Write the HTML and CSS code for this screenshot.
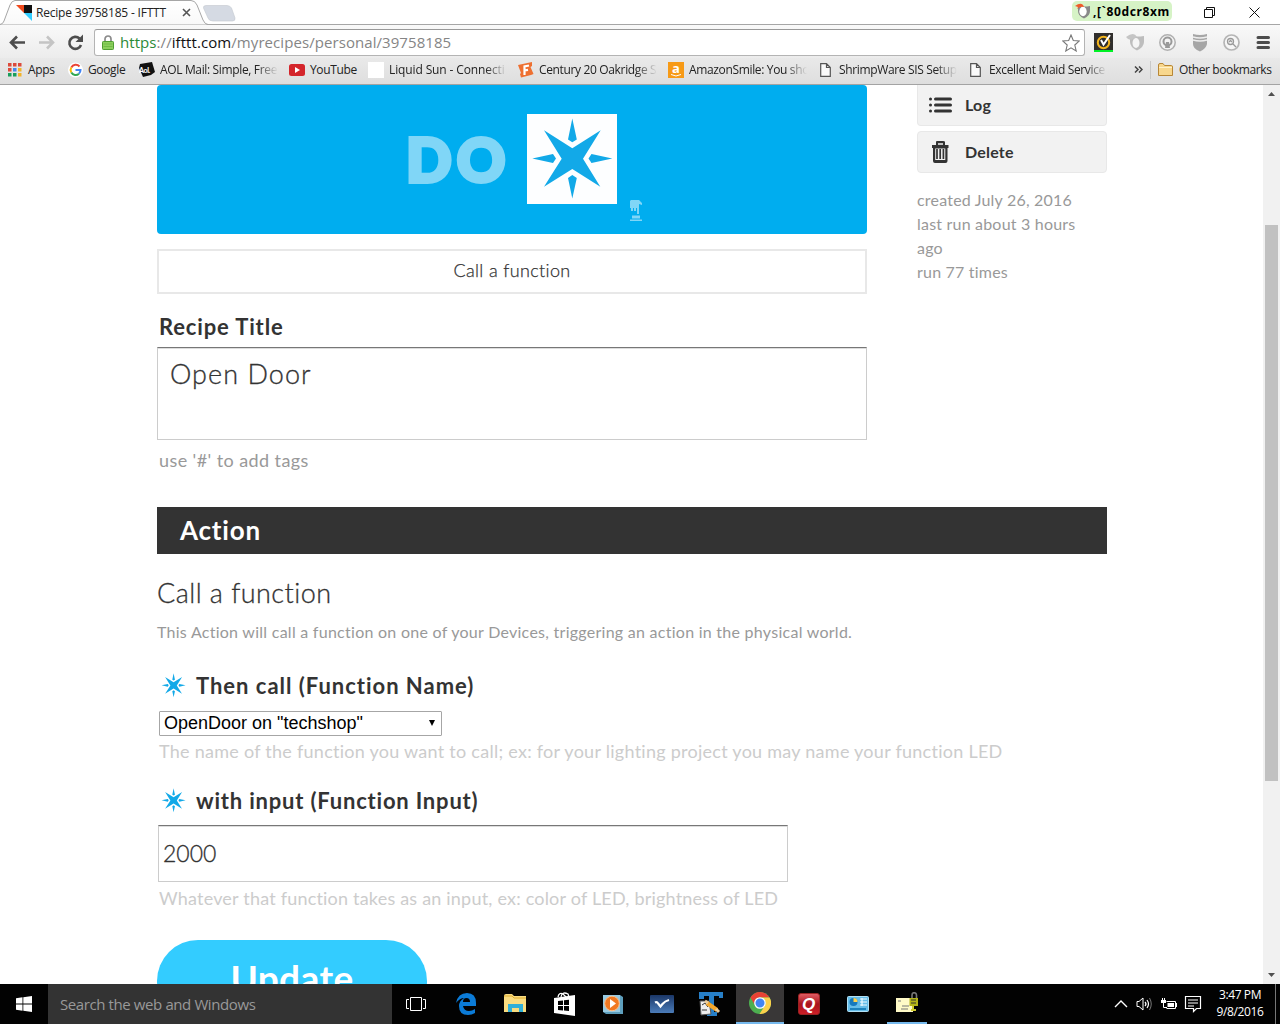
FILE: index.html
```html
<!DOCTYPE html>
<html lang="en">
<head>
<meta charset="utf-8">
<title>Recipe 39758185 - IFTTT</title>
<link rel="stylesheet" href="styles.css">
</head>
<body>
<svg class="defs" aria-hidden="true">
  <symbol id="star" viewBox="0 0 90 90"><path d="M17 16.3 45.3 34.3 73.7 16.3 56 44.7 73.3 72.7 45.3 55 17 72.7 34.7 44.7ZM45.3 4.5 49.8 25.5 45.3 28.3 41 25.5ZM45.3 84.5 41 64 45.3 61 49.8 64ZM5.3 44.5 26 40 29 44.5 26 49ZM85.3 44.5 64.5 40 61.5 44.5 64.5 49Z"/></symbol>
  <symbol id="page" viewBox="0 0 11 14"><path d="M.7.7H6.5L10.3 4.5V13.3H.7ZM6.5.7V4.5H10.3" fill="#fafafa" stroke="#555" stroke-width="1.2"/></symbol>
</svg>
<div class="tabstrip">
  <svg class="tab-shape" width="240" height="25" viewBox="0 0 240 25">
    <defs><linearGradient id="tg" x1="0" y1="0" x2="0" y2="1"><stop offset="0" stop-color="#fff"/><stop offset="1" stop-color="#f9f9f9"/></linearGradient></defs>
    <path d="M0 24.5Q3 24 4 21L10 5Q12 .5 15 .5H191Q195 .5 197 5L203 20Q205 24.5 208 24.5" fill="url(#tg)" stroke="#a6a6a6"/>
    <path d="M206 5.5H227Q230 5.500 231.500 8L235 18Q235.500 21 232.500 21H213Q209 21 208 18L203.500 8Q203 5.500 206 5.500Z" fill="#d5dae3" stroke="#c3c7cf" stroke-width=".6"/>
  </svg>
  <div class="tab">
    <svg width="16" height="16" viewBox="0 0 16 16"><path d="M0 0H8V8Z" fill="#f04a1d"/><path d="M8 0H16V8H8Z" fill="#111"/><path d="M8 8H16V16Z" fill="#3cf"/></svg>
    <span class="tab-title">Recipe 39758185 - IFTTT</span>
    <svg width="9" height="9" viewBox="0 0 9 9"><path d="M1 1 8 8M8 1 1 8" stroke="#555" stroke-width="1.6"/></svg>
  </div>
  <div class="window-tools">
    <div class="profile">
      <svg width="16" height="16" viewBox="0 0 16 16"><path d="M3 3Q9 4 15 3V8Q15 13 9 15.500Q3 13 3 8Z" fill="#888"/><ellipse cx="8" cy="8.500" rx="3.700" ry="4.700" fill="#fff"/><path d="M0 3Q7-2 9 4Q5 3 2 6L3 4Z" fill="#f15a29"/></svg>
      <b>,[`80dcr8xm</b>
    </div>
    <svg class="restore" width="11" height="11" viewBox="0 0 11 11"><path d="M.5 2.500H8.500V10.500H.5ZM2.500 2.500V.5H10.500V8.500H8.500" fill="none" stroke="#111"/></svg>
    <svg width="11" height="11" viewBox="0 0 11 11"><path d="M.5.5 10.500 10.500M10.500.5.5 10.500" stroke="#111"/></svg>
  </div>
</div>
<div class="toolbar">
  <svg class="nav" width="86" height="20" viewBox="0 0 86 20">
    <path d="M19 9.500H5M11 3.500 5 9.500 11 15.500" fill="none" stroke="#4d4d4d" stroke-width="2.600"/>
    <path d="M33 9.500H47M41 3.500 47 9.500 41 15.500" fill="none" stroke="#c4c4c4" stroke-width="2.600"/>
    <path d="M73.500 5.500A6 6 0 1 0 75 12" fill="none" stroke="#4d4d4d" stroke-width="2.600"/><path d="M77 1.500V9H69.500Z" fill="#4d4d4d"/>
  </svg>
  <div class="omnibox">
    <svg class="lock" width="12" height="15" viewBox="0 0 12 15"><path d="M3 7V4a3 3 0 0 1 6 0V7" fill="none" stroke="#8b8b8b" stroke-width="1.700"/><rect x=".5" y="6.500" width="11" height="8" rx=".8" fill="#8ccf5e" stroke="#4f9e32"/><path d="M1.500 9H10.500M1.500 11.500H10.500" stroke="#70bb47"/></svg>
    <span class="url"><i class="secure">https</i>://<i class="host">ifttt.com</i>/myrecipes/personal/39758185</span>
    <svg class="fav" width="18" height="18" viewBox="0 0 18 18"><path d="M9 1 11.300 6.500 17.300 7 12.800 11 14.200 17 9 13.800 3.800 17 5.200 11 .7 7 6.700 6.500Z" fill="#fff" stroke="#777" stroke-width="1.100"/></svg>
  </div>
  <svg class="extensions" width="180" height="20" viewBox="0 0 180 20">
    <path d="M0 0H19V19H0Z" fill="#302e2c"/><path d="M0 17H19V19H0Z" fill="#00f026"/><circle cx="9.500" cy="9.500" r="5.700" fill="none" stroke="#f4b51d" stroke-width="2"/><path d="M7 7 9.500 11.500 16 2" fill="none" stroke="#fff" stroke-width="2"/>
    <path d="M36 3Q43 4 50 3V9Q50 14 43 17.500Q36 14 36 9Z" fill="#bdbdbd"/><ellipse cx="42" cy="10" rx="3.500" ry="5" fill="#f5f5f5"/><path d="M32 4Q40-2 43 4L37 7 34 6Z" fill="#c5c5c5"/>
    <circle cx="73.500" cy="9.500" r="7.700" fill="#f4f4f4" stroke="#b0b0b0" stroke-width="1.500"/><circle cx="73.500" cy="8.500" r="4" fill="none" stroke="#999" stroke-width="2"/><path d="M72 9H75L76 15H71Z" fill="#999"/>
    <path d="M99 1Q106 3 113 1V11Q112 16 106 18.500Q99 16 99 11Z" fill="#a6a6a6"/><path d="M99 4Q106 6 113 4M99 7Q106 9 113 7" fill="none" stroke="#eee" stroke-width="1.400"/>
    <circle cx="137.500" cy="9.500" r="7.500" fill="#f6f6f6" stroke="#b5b5b5" stroke-width="1.700"/><circle cx="136.500" cy="8.500" r="3" fill="none" stroke="#999" stroke-width="1.300"/><path d="M139 11 142 14M135 9 136.500 7.500 138 9" fill="none" stroke="#999" stroke-width="1.300"/>
    <path d="M164 4.500H174.500M164 9.500H174.500M164 14.500H174.500" stroke="#4d4d4d" stroke-width="3" stroke-linecap="round"/>
  </svg>
</div>
<div class="bookmarks">
  <div class="bm w60"><svg width="14" height="14" viewBox="0 0 14 14"><path d="M0 0H3.500V3.500H0ZM5 0H8.500V3.500H5ZM10 0H13.500V3.500H10ZM0 5H3.500V8.500H0Z" fill="#dc4a3b"/><path d="M0 10H3.500V13.500H0ZM5 10H8.500V13.500H5Z" fill="#189e5b"/><path d="M5 5H8.500V8.500H5Z" fill="#4587ee"/><path d="M10 5H13.500V8.500H10ZM10 10H13.500V13.500H10Z" fill="#f2b32a"/></svg><span class="apps">Apps</span></div>
  <div class="bm w71"><svg width="15" height="16" viewBox="0 0 15 16"><circle cx="7.500" cy="8" r="7.500" fill="#fff"/><path d="M11.500 4.500A5 5 0 0 0 3.300 5.500" fill="none" stroke="#ea4335" stroke-width="2"/><path d="M3.300 5.500A5 5 0 0 0 3.300 10.500" fill="none" stroke="#fbbc05" stroke-width="2"/><path d="M3.300 10.500A5 5 0 0 0 11 11.700" fill="none" stroke="#34a853" stroke-width="2"/><path d="M7.500 8H12.500Q12.500 10 11 11.700" fill="none" stroke="#4285f4" stroke-width="2"/></svg><span>Google</span></div>
  <div class="bm w150"><svg width="16" height="16" viewBox="0 0 16 16"><path d="M1 2 13 0 16 10 12 13 4 15 0 6Z" fill="#111"/><text x="0" y="10.500" class="aol">Aol.</text></svg><span>AOL Mail: Simple, Free</span></div>
  <div class="bm w79"><svg width="16" height="16" viewBox="0 0 16 16"><rect y="2" width="16" height="12" rx="2.500" fill="#d4252b"/><path d="M6 5V11L11 8Z" fill="#fff"/></svg><span>YouTube</span></div>
  <div class="bm w150"><svg width="16" height="16" viewBox="0 0 16 16"><path d="M0 0H16V16H0Z" fill="#fff"/></svg><span class="liquid">Liquid Sun - Connecti</span></div>
  <div class="bm w150"><svg width="16" height="16" viewBox="0 0 16 16"><path d="M0 3 14 0V4L12.500 5 15.500 12 13 13 3 15.500 2 12 3 11Z" fill="#ee7031"/><path d="M6.500 13V4.500L11 3.500M6.500 8.500 10 7.800" fill="none" stroke="#fff" stroke-width="2.200"/></svg><span>Century 20 Oakridge S</span></div>
  <div class="bm w150"><svg width="16" height="16" viewBox="0 0 16 16"><path d="M0 0H16V16H0Z" fill="#f79a16"/><text x="4" y="11" class="amazon">a</text><path d="M3 12.500Q8 15.500 13 12.500" fill="none" stroke="#fff"/></svg><span>AmazonSmile: You sho</span></div>
  <div class="bm w150 file"><svg width="11" height="14"><use href="#page"/></svg><span>ShrimpWare SIS Setup</span></div>
  <div class="bm w150 file"><svg width="11" height="14"><use href="#page"/></svg><span>Excellent Maid Service</span></div>
  <svg class="more" width="9" height="7" viewBox="0 0 9 7"><path d="M1 .5 4 3.500 1 6.500M5 .5 8 3.500 5 6.500" fill="none" stroke="#444" stroke-width="1.500"/></svg>
  <div class="bm other"><svg width="15" height="13" viewBox="0 0 15 13"><path d="M.5 12.500V2Q.5.5 2 .5H5L6.500 2.500H13.500Q14.500 2.500 14.500 4V12.500Z" fill="#f8d78d" stroke="#b88736"/><path d="M1 4.500H14" stroke="#fff1c8"/></svg><span>Other bookmarks</span></div>
</div>

<div class="viewport">
  <main class="content">
    <div class="top">
      <div class="recipe">
        <div class="banner">
          <span class="do">DO</span>
          <svg class="tile" width="90" height="90"><use href="#star"/></svg>
          <svg class="button-press" width="12" height="21" viewBox="0 0 12 21"><path d="M1 0H9L12 3V5L9 4V14H7V8H6V11H4V8H3V11H1V8H0V1ZM2 15.500H10V18.500H2ZM0 19.500H12V21H0Z"/></svg>
        </div>
        <div class="function-name"><span>Call a function</span></div>
        <h3 class="label title-label"><span>Recipe Title</span></h3>
        <div class="field title-field"><span>Open Door</span></div>
        <p class="hint tags"><span>use '#' to add tags</span></p>
      </div>
      <aside class="side">
        <div class="side-button log"><svg width="23" height="16" viewBox="0 0 23 16"><path d="M6.500 2H21.500M6.500 8H21.500M6.500 14H21.500" stroke="#333" stroke-width="3" stroke-linecap="round"/><path d="M1.500 2h.01M1.500 8h.01M1.500 14h.01" stroke="#333" stroke-width="3" stroke-linecap="round"/></svg><span>Log</span></div>
        <div class="side-button"><svg width="23" height="22" viewBox="0 0 23 22"><path d="M7 1Q7 0 8 0H14Q16 0 16 1V4H19.500V7H18.500V20Q18.500 22 16.500 22H6Q4 22 4 20V7H3V4H7Z" fill="#333"/><path d="M9 3H14" stroke="#f2f2f2" stroke-width="1.500"/><path d="M6.200 7.500H16.300V19H6.200Z" fill="#f2f2f2"/><path d="M8 8V18M11.200 8V18M14.400 8V18" stroke="#333" stroke-width="1.700"/></svg><span>Delete</span></div>
        <p class="meta">created July 26, 2016<br><span>last run about 3 hours</span><br>ago<br>run 77 times</p>
      </aside>
    </div>
    <h2 class="section"><span>Action</span></h2>
    <h3 class="action-name"><span>Call a function</span></h3>
    <p class="description"><span>This Action will call a function on one of your Devices, triggering an action in the physical world.</span></p>
    <h3 class="label with-icon"><svg width="27" height="27"><use href="#star"/></svg><span class="then">Then call (Function Name)</span></h3>
    <div class="select"><span>OpenDoor on "techshop"</span><svg width="6" height="6" viewBox="0 0 6 6"><path d="M0 0H6L3 6Z"/></svg></div>
    <p class="hint pale name-hint"><span>The name of the function you want to call; ex: for your lighting project you may name your function LED</span></p>
    <h3 class="label with-icon second"><svg width="27" height="27"><use href="#star"/></svg><span class="with">with input (Function Input)</span></h3>
    <div class="field input-field"><span>2000</span></div>
    <p class="hint pale input-hint"><span>Whatever that function takes as an input, ex: color of LED, brightness of LED</span></p>
    <div class="update"><span>Update</span></div>
  </main>
  <div class="scrollbar">
    <svg width="7" height="4" viewBox="0 0 7 4"><path d="M0 4 3.500 0 7 4Z" fill="#505050"/></svg>
    <div class="thumb"></div>
    <svg class="down" width="7" height="4" viewBox="0 0 7 4"><path d="M0 0 3.500 4 7 0Z" fill="#505050"/></svg>
  </div>
</div>

<div class="taskbar">
  <div class="start"><svg width="16" height="16" viewBox="0 0 16 16"><path d="M0 2.200 6.500 1.300V7.500H0ZM7.300 1.200 16 0V7.500H7.300ZM0 8.400H6.500V14.700L0 13.800ZM7.300 8.400H16V16L7.300 14.800Z" fill="#fff"/></svg></div>
  <div class="search"><span>Search the web and Windows</span></div>
  <div class="task"><svg width="20" height="14" viewBox="0 0 20 14"><path d="M4.500.5H15.500V13.500H4.500ZM3 2.500H.5V11.500H3M17 2.500H19.500V11.500H17" fill="none" stroke="#fff"/></svg></div>
  <div class="task edge"><svg width="20" height="22" viewBox="0 0 20 22"><path d="M0 10Q2 0 11 0Q20 0 20 10V13H7Q8 18 13 18Q16 18 19 16V20Q16 22 12 22Q3 22 3 13Q3 8 8 5Q4 5 0 10ZM7 9H14Q14 5 10.500 5Q7 5 7 9Z" fill="#0b7bd7"/></svg></div>
  <div class="task"><svg width="22" height="20" viewBox="0 0 22 20"><path d="M0 2Q0 0 2 0H8L10 2H22V18H0Z" fill="#f9dc80"/><path d="M0 2H8L10 4H22" fill="none" stroke="#dba92e"/><path d="M4 10H19V18H15V14H8V18H4Z" fill="#30afd8"/></svg></div>
  <div class="task"><svg width="21" height="24" viewBox="0 0 21 24"><path d="M0 6 21 3V24L0 21Z" fill="#fff"/><path d="M4 5Q5 0 9 2L13 6M7 5Q8-1 14 2L15 5" fill="none" stroke="#fff" stroke-width="1.300"/><path d="M4 9 9 8.500V13H4ZM10 8.300 15 7.800V13H10ZM4 14H9V18.500L4 18ZM10 14H15V19L10 18.600Z" fill="#000"/></svg></div>
  <div class="task"><svg width="20" height="20" viewBox="0 0 20 20"><path d="M0 1H17V18H0Z" fill="#98cae2"/><path d="M17 1 20 3V20H3L0 18H17Z" fill="#5e9fbd"/><circle cx="9" cy="9.500" r="7.300" fill="#f17923" stroke="#ffc18b"/><path d="M7 5V14L13 9.500Z" fill="#fff"/></svg></div>
  <div class="task"><svg width="24" height="18" viewBox="0 0 24 18"><defs><linearGradient id="blue" x1="0" y1="0" x2="0" y2="1"><stop offset="0" stop-color="#1b3768"/><stop offset="1" stop-color="#4b7cb9"/></linearGradient></defs><rect width="24" height="18" rx="1" fill="url(#blue)"/><path d="M5 7.500Q7 6.500 8.500 9L10.500 11.500 12.500 9Q15 6 19 5" fill="none" stroke="#fff" stroke-width="2.200"/></svg></div>
  <div class="task"><svg width="24" height="24" viewBox="0 0 24 24"><path d="M0 0H24V6H20V4H15V20H18V24H8V20H10V4H5V7H0Z" fill="#277fc7"/><path d="M1 9H10L12 22 2 23Z" fill="#eee" stroke="#555"/><path d="M3 13 6 11 9 15M3 18H8" fill="none" stroke="#333"/><path d="M8 11 18 18" stroke="#f4a72b" stroke-width="4"/><path d="M6 9 9 11M17 17 20 20" stroke="#eacb9a" stroke-width="3"/></svg></div>
  <div class="task active"><svg width="22" height="22" viewBox="0 0 22 22"><circle cx="11" cy="11" r="11" fill="#4daf50"/><path d="M1.500 5.500A11 11 0 0 1 20.500 5.500H11A5.500 5.500 0 0 0 6 13.500Z" fill="#e84135"/><path d="M20.500 5.500A11 11 0 0 1 10.500 22L15.800 13.700A5.500 5.500 0 0 0 11 5.500Z" fill="#fbd04b"/><circle cx="11" cy="11" r="5.200" fill="#4285f4" stroke="#fff" stroke-width="1.300"/></svg></div>
  <div class="task"><svg width="22" height="22" viewBox="0 0 22 22"><defs><linearGradient id="red" x1="0" y1="0" x2="0" y2="1"><stop offset="0" stop-color="#e35f66"/><stop offset=".5" stop-color="#a9141d"/><stop offset="1" stop-color="#ce1f28"/></linearGradient></defs><rect x=".5" y=".5" width="21" height="21" rx="2.500" fill="url(#red)" stroke="#922"/><text x="4" y="17" class="quicken">Q</text></svg></div>
  <div class="task"><svg width="22" height="16" viewBox="0 0 22 16"><rect x=".5" y=".5" width="21" height="15" rx="1" fill="#65bde9" stroke="#b2e1f5"/><circle cx="6.500" cy="6" r="4" fill="#1579bd"/><path d="M6.500 6V2A4 4 0 0 1 10.500 6Z" fill="#ffd24b"/><path d="M13 3H20M13 6H20M13 9H20M15 2V10" stroke="#effbff" stroke-width="1.200"/><path d="M3 13H19" stroke="#1c83bd" stroke-width="2"/></svg></div>
  <div class="task running"><svg width="22" height="22" viewBox="0 0 22 22"><path d="M0 6H17V20H0Z" fill="#fffac7"/><path d="M2 9H5M6 14H13M5 17H12" stroke="#777"/><path d="M16 6V3Q16 .7 18 .7Q20.500.7 20.500 3V6" fill="none" stroke="#777" stroke-width="1.600"/><path d="M13.500 6H22V14H13.500Z" fill="#b4b418"/><path d="M15 8H20M15 11H20" stroke="#333"/><path d="M17 14V18M15 18H20" stroke="#d1cc2e" stroke-width="2"/></svg></div>
  <div class="tray">
    <svg width="90" height="20" viewBox="0 0 90 20"><path d="M1 13 7 7 13 13" fill="none" stroke="#fff" stroke-width="1.400"/><path d="M23 7.500H25L29 4V16L25 12.500H23Z" fill="none" stroke="#fff"/><path d="M31 8Q33 10 31 12M33 6Q36 10 33 14" fill="none" stroke="#fff" stroke-width="1.200"/><path d="M35.500 4Q39 10 35.500 16" fill="none" stroke="#777"/><path d="M52.500 7.500H61.500V14.500H52.500M62.500 9V13" fill="none" stroke="#fff"/><path d="M53.500 9H60V13H53.500Z" fill="#fff"/><path d="M47 6H52V9H47ZM48 4H49V6H48ZM50 4H51V6H50Z" fill="#fff"/><path d="M49.500 9V13.500H53" fill="none" stroke="#fff"/><path d="M71.500 2.500H86.500V14.500H82.500L79.500 17.500V14.500H71.500ZM74 6H84M74 9H84M74 12H80" fill="none" stroke="#fff" stroke-width="1.200"/></svg>
    <div class="clock"><span>3:47 PM</span><span class="date">9/8/2016</span></div>
  </div>
</div>
</body>
</html>
```
FILE: styles.css
```css
* { box-sizing: border-box; }
body { margin: 0; width: 1280px; height: 1024px; overflow: hidden; display: flex; flex-direction: column; background: #fff; color: #333; font-family: Lato, sans-serif; }
h2, h3, p { margin: 0; font-weight: 400; white-space: nowrap; }
svg { display: block; flex: none; }
.defs { display: none; }

/* Browser frame */
.tabstrip { height: 25px; flex: none; position: relative; display: flex; justify-content: space-between; box-shadow: inset 0 -1px #a6a6a6; }
.tab-shape { position: absolute; left: 0; top: 0; }
.tab { position: relative; display: flex; align-items: center; width: 200px; padding-left: 16px; font: 12px "Open Sans", sans-serif; color: #222; }
.tab-title { margin-left: 4px; width: 146px; white-space: nowrap; letter-spacing: -.2px; }
.window-tools { display: flex; align-items: center; padding-right: 20px; }
.profile { display: flex; align-items: center; width: 100px; height: 20px; margin-top: -4px; padding-left: 3px; border-radius: 5px; background: #d6f3c6; color: #000; }
.profile b { margin: 2px 0 0 2px; font: bold 12px "Noto Sans", sans-serif; letter-spacing: .6px; }
.restore { margin: 0 34px 0 32px; }
.toolbar { height: 33px; flex: none; display: flex; align-items: center; padding: 4px 0 2px 6px; background: linear-gradient(#f9f9f9, #ececec); }
.omnibox { width: 991px; height: 27px; margin-left: 2px; padding: 0 4px 0 7px; display: flex; align-items: center; border: 1px solid #b4b4b4; border-top-color: #999; border-radius: 3px; background: #fff; font: 15px/20px "Open Sans", sans-serif; color: #858585; }
.omnibox i { font-style: normal; }
.url { margin: -2px 0 0 6px; flex: 1; white-space: nowrap; letter-spacing: .07px; }
.secure { color: #2b8a37; }
.host { color: #111; }
.extensions { margin-left: 9px; }
.bookmarks { height: 27px; flex: none; display: flex; align-items: center; padding: 0 0 3px 8px; background: linear-gradient(#e9e9e9, #dedede); border-bottom: 1px solid #a3a3a3; font: 12px "Open Sans", sans-serif; color: #222; }
.bm { display: flex; align-items: center; gap: 5px; flex: none; white-space: nowrap; letter-spacing: -.35px; }
.w60 { width: 60px; gap: 6px; }
.w71 { width: 71px; }
.w79 { width: 79px; }
.w150 { width: 150px; }
.w150 span { width: 118px; mask-image: linear-gradient(90deg, #000 82%, transparent); }
.w150 .liquid { letter-spacing: -.12px; }
.file { padding-left: 2px; gap: 8px; }
.aol { font: 900 7px Lato, sans-serif; fill: #fff; }
.amazon { font: bold 13px "Open Sans", sans-serif; fill: #fff; }
.more { margin-left: 16px; }
.other { margin-left: 7px; padding-left: 7px; height: 18px; border-left: 1px solid #c9c9c9; gap: 6px; letter-spacing: -.4px; }

/* Recipe page */
.viewport { height: 899px; flex: none; display: flex; justify-content: space-between; overflow: hidden; }
.content { width: 950px; margin-left: 157px; }
.top { display: flex; justify-content: space-between; height: 422px; }
.recipe { width: 710px; }
.banner { height: 149px; display: flex; align-items: center; padding: 0 0 2px 249px; border-radius: 4px; background: #00adef; }
.do { width: 121px; padding-left: 0; font-family: "Lato Black", Lato, sans-serif; font-size: 60px; font-weight: 900; line-height: 66px; letter-spacing: 5px; color: #80d6f7; -webkit-text-stroke: 4px #80d6f7; }
.tile { background: #fdfeff; fill: #12a9e8; }
.button-press { align-self: flex-end; margin: 0 0 11px 13px; fill: #80d6f7; }
.function-name { height: 45px; margin-top: 15px; padding-bottom: 3px; border: 2px solid #e8e8e8; display: flex; align-items: center; justify-content: center; font-family: "Lato Light", Lato, sans-serif; font-size: 18px; letter-spacing: .35px; -webkit-text-stroke: .25px #333; }
.label { display: flex; align-items: center; height: 28px; font-size: 22px; font-weight: 700; line-height: 28px; }
.title-label { margin: 19px 0 6px 2px; letter-spacing: .85px; }
.field { border: 1px solid #ccc; border-top-color: #777; box-shadow: inset 0 1px #ddd; font-family: "Lato Light", Lato, sans-serif; -webkit-text-stroke: .3px #333; }
.title-field { height: 93px; padding: 9px 12px; font-size: 27px; line-height: 34px; letter-spacing: 1.05px; }
.hint { font-size: 18px; line-height: 24px; color: #999; }
.tags { margin: 8px 0 0 2px; letter-spacing: .42px; }
.side { width: 190px; }
.side-button { height: 42px; margin-bottom: 5px; padding-left: 11px; display: flex; align-items: center; gap: 13px; background: #f2f2f2; border: 1px solid #e8e8e8; border-radius: 4px; font-size: 16px; font-weight: 700; letter-spacing: .2px; }
.side-button span { margin-top: -2px; }
.log { height: 41px; padding-bottom: 1px; border-top: 0; border-radius: 0 0 4px 4px; }
.log span { margin-top: 0; }
.meta { margin-top: 15px; font-size: 16px; line-height: 24px; color: #999; letter-spacing: .2px; }
.section { height: 47px; padding-left: 23px; background: #333; color: #fff; font-size: 26px; line-height: 47px; font-weight: 700; letter-spacing: .8px; }
.action-name { margin-top: 21px; font-family: "Lato Light", Lato, sans-serif; font-size: 27px; line-height: 36px; letter-spacing: .45px; -webkit-text-stroke: .3px #333; }
.description { margin-top: 9px; font-size: 16px; line-height: 24px; color: #999; letter-spacing: .265px; }
.with-icon { margin: 28px 0 0 3px; gap: 9px; }
.with-icon svg { margin-top: -2px; fill: #12a9e8; }
.then { letter-spacing: .98px; }
.with { letter-spacing: .8px; }
.select { width: 283px; height: 25px; margin: 11px 0 0 2px; padding: 0 6px 1px 4px; display: flex; align-items: center; justify-content: space-between; border: 1px solid #a6a6a6; border-radius: 1px; color: #000; font: 18px "Liberation Sans", sans-serif; }
.pale { margin-left: 2px; color: #ccc; }
.name-hint { margin-top: 3px; letter-spacing: .263px; }
.second { margin-top: 24px; }
.input-field { width: 630px; height: 57px; margin: 10px 0 0 1px; padding-left: 4px; font-size: 23px; line-height: 54px; }
.input-hint { margin-top: 4px; letter-spacing: .2px; }
.update { width: 270px; height: 82px; margin-top: 30px; border-radius: 41px; background: #3cf; color: #fff; text-align: center; font-size: 37px; line-height: 76px; font-weight: 700; letter-spacing: .4px; }
.scrollbar { width: 17px; padding-top: 7px; display: flex; flex-direction: column; align-items: center; background: #f1f1f1; }
.thumb { width: 13px; height: 556px; margin-top: 129px; background: #c1c1c1; }
.down { margin: auto 0 7px; }

/* Taskbar */
.taskbar { height: 40px; flex: none; display: flex; background: #020202; }
.start { width: 48px; display: grid; place-items: center; }
.search { width: 344px; padding-left: 12px; background: #333; color: #999; font: 15px/41px "Open Sans", sans-serif; }
.search span { letter-spacing: -.4px; }
.task { width: 48px; margin-right: 1px; display: grid; place-items: center; }
.edge { margin-left: 1px; }
.active { background: #393737; border-bottom: 2px solid #76b9ed; }
.running { width: 40px; margin-left: 4px; border-bottom: 2px solid #76b9ed; }
.quicken { font: italic bold 17px "Liberation Sans", sans-serif; fill: #fff; }
.tray { margin-left: auto; display: flex; align-items: center; padding-right: 2px; border-right: 1px solid #777; margin-right: 4px; }
.tray svg { margin-right: 3px; }
.clock { width: 66px; height: 36px; display: flex; flex-direction: column; align-items: center; color: #fff; font: 12px/17px "Open Sans", sans-serif; letter-spacing: -.4px; }
```
